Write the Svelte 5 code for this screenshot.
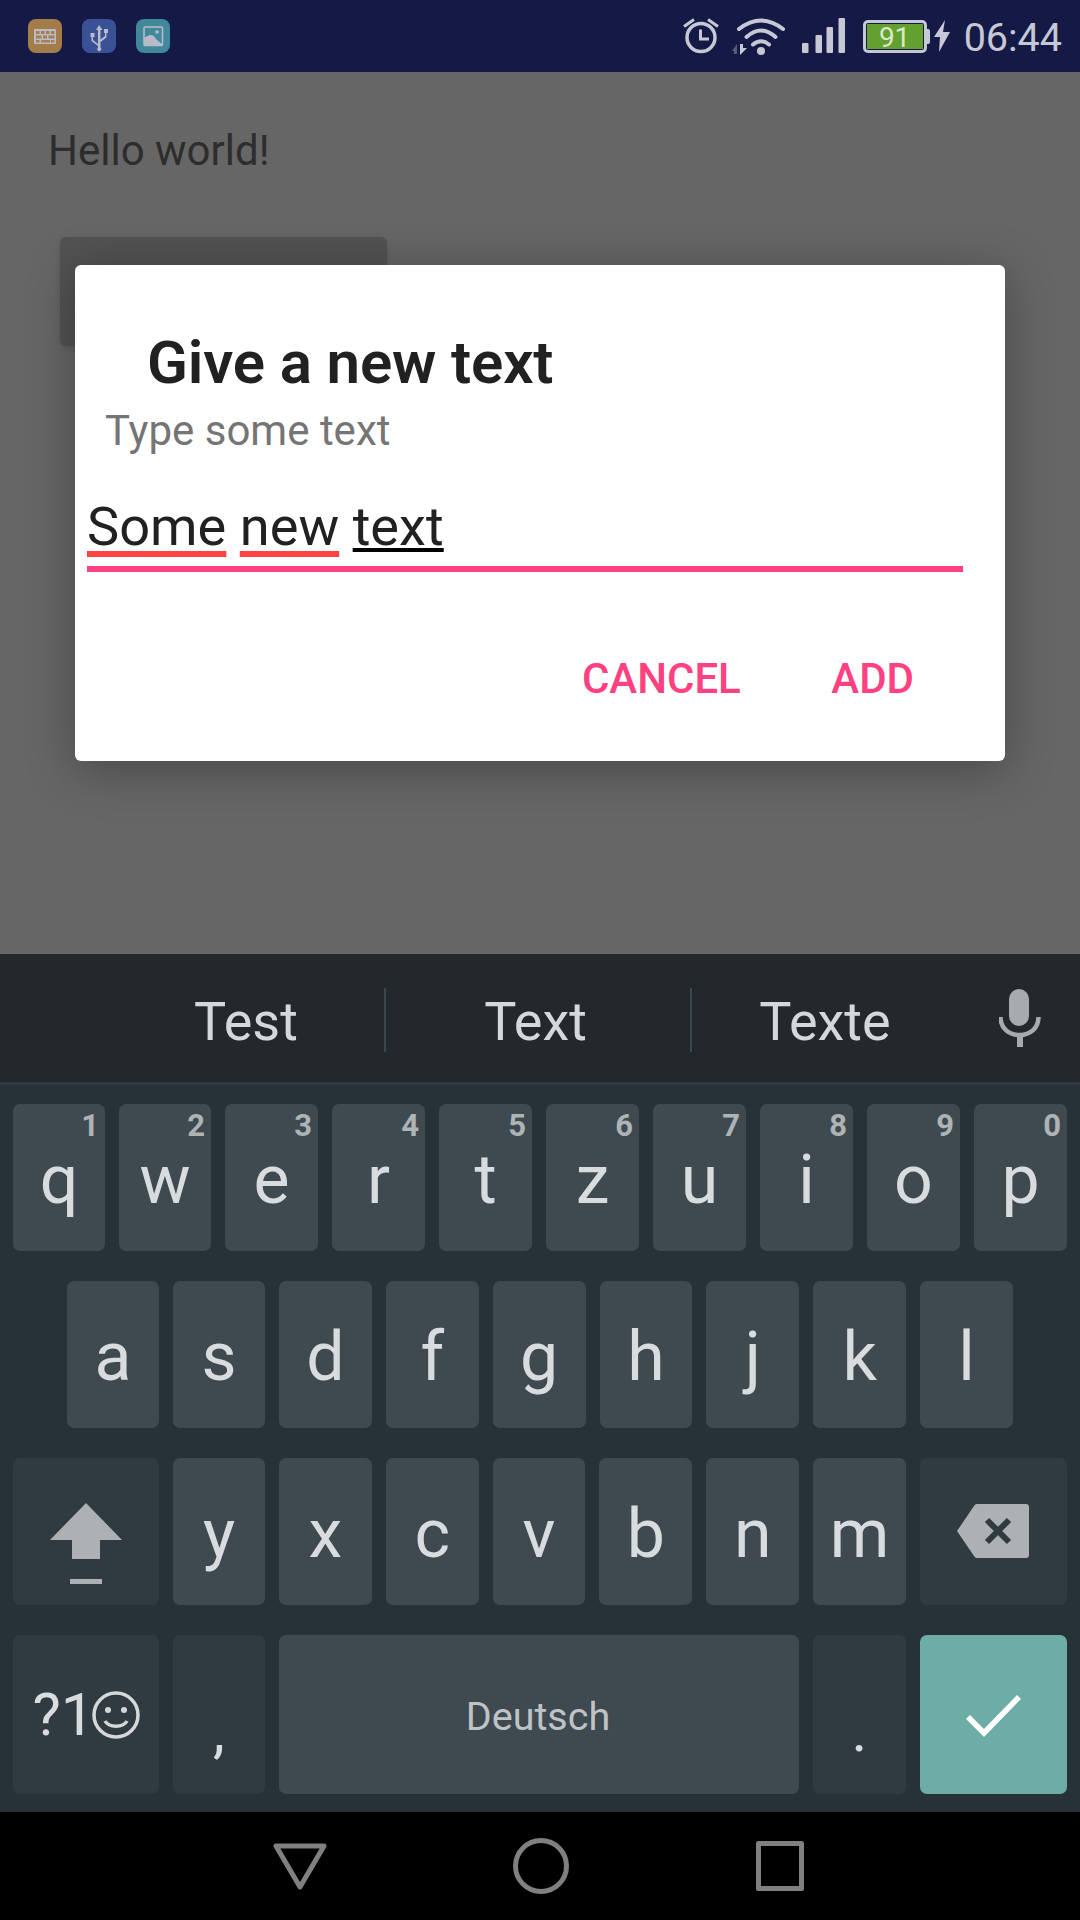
<script>
  const suggestions = [
    { text: 'Test', width: 280 },
    { text: 'Text', width: 306 },
    { text: 'Texte', width: 266 }
  ];
  const row1 = [['q', '1'], ['w', '2'], ['e', '3'], ['r', '4'], ['t', '5'], ['z', '6'], ['u', '7'], ['i', '8'], ['o', '9'], ['p', '0']];
  const row2 = ['a', 's', 'd', 'f', 'g', 'h', 'j', 'k', 'l'];
  const row3 = ['y', 'x', 'c', 'v', 'b', 'n', 'm'];
</script>

<div class="screen">
  <header class="statusbar">
    <div class="notif">
      <span class="app orange">
        <svg viewBox="0 0 34 34" width="34" height="34">
          <rect x="6" y="10" width="22" height="15" rx="1" fill="#b9bcc8" />
          <g fill="#a67f4c">
            <rect x="8" y="12" width="3.5" height="3" /><rect x="13" y="12" width="3.5" height="3" /><rect x="18" y="12" width="3.5" height="3" /><rect x="23" y="12" width="3.5" height="3" />
            <rect x="8" y="16.5" width="5.5" height="3" /><rect x="15" y="16.5" width="4" height="3" /><rect x="20.5" y="16.5" width="6" height="3" />
            <rect x="8" y="21" width="3.5" height="2.5" /><rect x="13" y="21" width="9" height="2.5" /><rect x="23" y="21" width="3.5" height="2.5" />
          </g>
        </svg>
      </span>
      <span class="app blue">
        <svg viewBox="0 0 34 34" width="34" height="34" fill="#b9bcc8">
          <path d="M17 6l-3 5h2v14l-5-4v-3h1.500v-4h-4v4h1v4l6.500 5v1.500a2 2 0 1 0 2.500 0V23l6-4.500V14h1.500v-4h-4v4h1v3l-4.500 3.500V11h2z" />
        </svg>
      </span>
      <span class="app teal">
        <svg viewBox="0 0 34 34" width="34" height="34">
          <rect x="8" y="8" width="18.500" height="18.500" rx="1" fill="none" stroke="#b9bcc8" stroke-width="1.500" />
          <path d="M8 25V19c3-2 5-3 7-3 3 0 4 3 6 5l5 4v2H8z" fill="#b9bcc8" />
          <circle cx="21" cy="13" r="1.800" fill="#b9bcc8" />
        </svg>
      </span>
    </div>

    <div class="status">
      <svg class="alarm" viewBox="0 0 36 38" width="36" height="38" fill="none" stroke="#c6c8d6">
        <circle cx="18" cy="20.500" r="14" stroke-width="3.500" />
        <path d="M1 9.500L11 2.500M25 2.500L35 9.500" stroke-width="3" />
        <path d="M17.500 12.500V22H26" stroke-width="3" />
      </svg>
      <svg class="wifi" viewBox="0 0 54 38" width="54" height="38" fill="none" stroke="#c6c8d6">
        <path d="M7 12Q29-5 51 12" stroke-width="4" stroke-linecap="round" />
        <path d="M14.500 20Q29 7 43.500 20" stroke-width="4" stroke-linecap="round" />
        <path d="M21 27.500Q29 21 37 27.500" stroke-width="4" stroke-linecap="round" />
        <circle cx="29" cy="34" r="4" fill="#c6c8d6" stroke="none" />
        <path d="M0 34l5-7v10H2v-3z" fill="#565b7a" stroke="none" />
        <path d="M8 27h3v4l4 0-7 7z" fill="#c6c8d6" stroke="none" />
      </svg>
      <svg class="signal" viewBox="0 0 43 36" width="43" height="36" fill="#c6c8d6">
        <rect x="0" y="25" width="6.500" height="10" rx="1" />
        <rect x="13.500" y="17" width="6.500" height="18" rx="1" />
        <rect x="24.500" y="9" width="6.500" height="26" rx="1" />
        <rect x="36.500" y="0" width="6.500" height="35" rx="1" />
      </svg>
      <div class="battery"><span>91</span></div>
      <svg class="bolt" viewBox="0 0 16 32" width="16" height="32" fill="#c6c8d6">
        <polygon points="11,0 0,17 6,17 5,32 16,12 9,12" />
      </svg>
      <span class="time">06:44</span>
    </div>
  </header>

  <main class="content">
    <p class="hello">Hello world!</p>
    <div class="btn"></div>

    <section class="dialog">
      <h2>Give a new text</h2>
      <p class="sub">Type some text</p>
      <div class="field">
        <span class="word typo">Some</span> <span class="word typo">new</span> <span class="word current">text</span>
      </div>
      <div class="actions">
        <span>CANCEL</span>
        <span>ADD</span>
      </div>
    </section>
  </main>

  <section class="keyboard">
    <div class="suggest">
      {#each suggestions as s, i}
        <div class="cell" class:sep={i < 2} class:mid={i === 1} style="width: {s.width}px">{s.text}</div>
      {/each}
      <div class="mic">
        <svg viewBox="0 0 42 58" width="42" height="58" fill="#a7abad">
          <rect x="10" y="0" width="20" height="37" rx="10" />
          <path d="M1.500 28c0 11 8 18 19 18s19-7 19-18" fill="none" stroke="#a7abad" stroke-width="4.500" />
          <rect x="18" y="45" width="6" height="13" />
        </svg>
      </div>
    </div>

    <div class="rows">
      <div class="row">
        {#each row1 as [ch, hint]}
          <div class="key"><span class="hint">{hint}</span>{ch}</div>
        {/each}
      </div>
      <div class="row row2">
        {#each row2 as ch}
          <div class="key">{ch}</div>
        {/each}
      </div>
      <div class="row">
        <div class="key fn shift">
          <svg viewBox="0 0 146 147" width="146" height="147" fill="#adb1b3">
            <path d="M73 45L109 82H87V101H59V82H37z" />
            <rect x="57" y="121" width="32" height="5" />
          </svg>
        </div>
        {#each row3 as ch}
          <div class="key">{ch}</div>
        {/each}
        <div class="key fn wide">
          <svg viewBox="0 0 147 147" width="147" height="147">
            <path d="M37 73L54 48a4 4 0 0 1 3-2h49a3 3 0 0 1 3 3v48a3 3 0 0 1-3 3H57a4 4 0 0 1-3-2z" fill="#adb1b3" />
            <path d="M67 62L89 84M89 62L67 84" stroke="#303b41" stroke-width="6" />
          </svg>
        </div>
      </div>
      <div class="row last">
        <div class="key fn shift sym">
          <span class="sym-text">?1</span><svg class="smile" viewBox="0 0 48 48" width="48" height="48" fill="none" stroke="#d5d8da" stroke-width="3.500">
            <circle cx="24" cy="24" r="22" />
            <circle cx="16" cy="19" r="3" fill="#d5d8da" stroke="none" />
            <circle cx="32" cy="19" r="3" fill="#d5d8da" stroke="none" />
            <path d="M13 30c4 7 18 7 22 0" stroke-width="3.500" />
          </svg>
        </div>
        <div class="key fn punct">,</div>
        <div class="key space">Deutsch</div>
        <div class="key fn punct">.</div>
        <div class="key wide enter">
          <svg viewBox="0 0 147 159" width="147" height="159" fill="none" stroke="#fff" stroke-width="5.500">
            <path d="M48 82L64 98L99 62" />
          </svg>
        </div>
      </div>
    </div>
  </section>

  <nav class="navbar">
    <svg viewBox="0 0 54 47" width="54" height="47" fill="none" stroke="#808080" stroke-width="5" stroke-linejoin="round">
      <path d="M3 3H51L27 44z" />
    </svg>
    <svg class="home" viewBox="0 0 56 56" width="56" height="56" fill="none" stroke="#808080" stroke-width="5">
      <circle cx="28" cy="28" r="25.500" />
    </svg>
    <svg viewBox="0 0 48 50" width="48" height="50" fill="none" stroke="#808080" stroke-width="5" stroke-linejoin="round">
      <rect x="2.500" y="2.500" width="43" height="45" />
    </svg>
  </nav>
</div>

<style>
  :global(body) { margin: 0; background: #000; }
  .screen {
    width: 1080px;
    height: 1920px;
    display: flex;
    flex-direction: column;
    overflow: hidden;
    font-family: Roboto, "Liberation Sans", sans-serif;
  }

  .statusbar {
    height: 72px;
    flex: none;
    background: #141a45;
    display: flex;
    justify-content: space-between;
    align-items: center;
    padding: 0 18px 0 28px;
    box-sizing: border-box;
  }
  .notif { display: flex; gap: 20px; }
  .app { width: 34px; height: 34px; border-radius: 8px; display: block; }
  .app svg { display: block; }
  .orange { background: #a37c49; }
  .blue { background: #3b5196; }
  .teal { background: #42889b; }
  .status { display: flex; align-items: center; }
  .status svg { display: block; flex: none; }
  .alarm { margin-top: -1px; }
  .wifi { margin-left: 13px; margin-top: -1px; }
  .signal { margin-left: 16px; }
  .battery {
    width: 64px;
    height: 33px;
    margin-left: 18px;
    border: 3px solid #c6c8d6;
    border-radius: 5px;
    box-sizing: border-box;
    padding: 1px;
    position: relative;
    background: #141a45;
  }
  .battery::after {
    content: '';
    position: absolute;
    right: -6px;
    top: 6px;
    width: 3px;
    height: 15px;
    background: #c6c8d6;
    border-radius: 0 2px 2px 0;
  }
  .battery span {
    display: block;
    height: 100%;
    background: #64a02f;
    color: #dbe8c8;
    font-size: 28px;
    line-height: 27px;
    text-align: center;
  }
  .bolt { margin-left: 7px; }
  .time {
    margin-left: 14px;
    margin-top: 3px;
    color: #c6c8d6;
    font-size: 39.500px;
    line-height: 44px;
    font-weight: 400;
  }

  .content {
    height: 882px;
    flex: none;
    background: #666;
    position: relative;
    padding: 54px 0 0 48px;
    box-sizing: border-box;
  }
  .hello {
    margin: 0;
    font-size: 42px;
    line-height: 50px;
    color: #2d2d2d;
  }
  .btn {
    width: 327px;
    height: 109px;
    margin: 61px 0 0 12px;
    background: #525252;
    border-radius: 6px;
    box-shadow: 0 2px 6px rgba(0, 0, 0, 0.12);
  }

  .dialog {
    position: absolute;
    left: 75px;
    top: 193px;
    width: 930px;
    height: 496px;
    background: #fff;
    border-radius: 6px;
    padding-top: 63px;
    box-sizing: border-box;
    box-shadow: 0 8px 50px rgba(0, 0, 0, 0.3);
  }
  .dialog h2 {
    margin: 0 0 0 72px;
    font-size: 60px;
    line-height: 70px;
    font-weight: 600;
    letter-spacing: -0.14px;
    color: #212121;
  }
  .sub {
    margin: 8px 0 0 30px;
    font-size: 42px;
    line-height: 50px;
    color: #757575;
  }
  .field {
    margin: 39px 42px 0 12px;
    height: 71px;
    border-bottom: 6px solid #ff4081;
    box-sizing: content-box;
    font-size: 54.200px;
    line-height: 64px;
    color: #212121;
    white-space: pre;
  }
  .word { text-decoration-line: underline; text-decoration-skip-ink: none; }
  .typo { text-decoration-color: #ff4444; text-decoration-thickness: 6px; text-underline-offset: 6px; }
  .current { text-decoration-color: #000; text-decoration-thickness: 4px; text-underline-offset: 3px; }
  .actions {
    display: flex;
    justify-content: flex-end;
    gap: 90.500px;
    margin-top: 82px;
    padding-right: 91px;
    font-size: 42px;
    line-height: 50px;
    font-weight: 500;
    color: #ff4081;
  }

  .keyboard { flex: none; background: #273238; }
  .suggest {
    height: 128px;
    display: flex;
    align-items: center;
    padding-left: 106px;
    background: #22282c;
    border-bottom: 3px solid #2f393f;
    box-sizing: content-box;
    color: #d5d8da;
    font-size: 54px;
  }
  .cell { text-align: center; position: relative; flex: none; padding-top: 7px; box-sizing: border-box; }
  .mid { padding-right: 7px; }
  .sep::after {
    content: '';
    position: absolute;
    right: 0;
    top: 5px;
    height: 64px;
    width: 2px;
    background: #3d464b;
  }
  .mic { margin-left: 41px; }
  .mic svg { display: block; }

  .rows {
    display: flex;
    flex-direction: column;
    gap: 30px;
    padding: 19px 13px 18px;
  }
  .row { display: flex; gap: 14px; height: 147px; }
  .row2 { padding: 0 54px; }
  .row.last { height: 159px; }
  .key {
    flex: 1 1 0;
    min-width: 0;
    position: relative;
    display: flex;
    align-items: center;
    justify-content: center;
    padding-top: 5px;
    box-sizing: border-box;
    background: #3f4a50;
    border-radius: 7px;
    color: #d9dcde;
    font-size: 68px;
  }
  .key:nth-child(-n+2) { flex: 0 0 92px; }
  .key svg { display: block; }
  .hint {
    position: absolute;
    top: 3px;
    right: 6px;
    font-size: 31px;
    line-height: 38px;
    font-weight: 700;
    color: #aeb3b6;
  }
  .fn { background: #303b41; }
  .key.shift { flex: 0 0 146px; padding: 0; }
  .wide { flex: 0 0 147px; padding: 0; }
  .space { flex: 0 0 520px; font-size: 39.500px; color: #bfc3c5; padding: 3px 2px 0 0; }
  .punct { font-size: 60px; align-items: flex-end; padding: 0 0 28px; }
  .sym-text { font-size: 60px; }
  .key .smile { margin-left: -3px; }
  .enter { background: #6eaca6; }

  .navbar {
    flex: 1;
    background: #000;
    display: flex;
    align-items: center;
    gap: 187px;
    padding-left: 273px;
  }
  .navbar svg { display: block; flex: none; }
  .home { margin-left: -1px; }
</style>
